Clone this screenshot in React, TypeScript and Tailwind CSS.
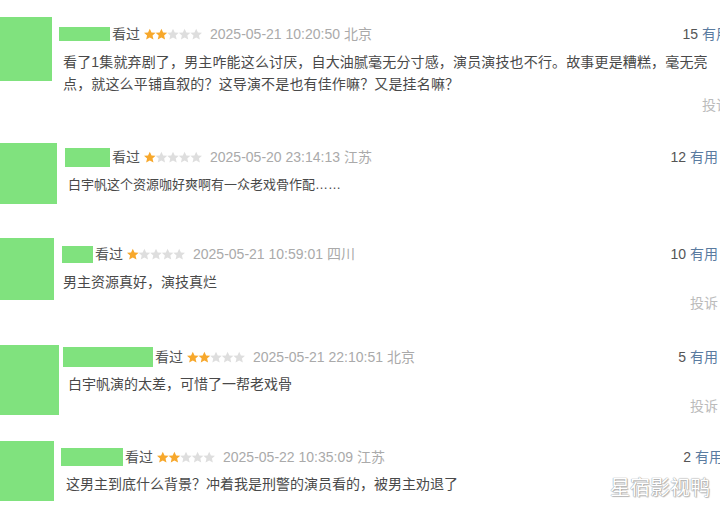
const font = {
  fontFamily: '"Liberation Sans", "Noto Sans CJK SC", sans-serif',
};

const Stars = ({ n }: { n: number }) => (
  <svg width="58" height="13" viewBox="0 0 60 13" className="shrink-0">
    {[0, 1, 2, 3, 4].map((i) => (
      <path
        key={i}
        transform={`translate(${i * 12} 0.5)`}
        d="M6 0 L7.8 3.9 L12 4.3 L8.8 7.1 L9.8 11.3 L6 9.1 L2.2 11.3 L3.2 7.1 L0 4.3 L4.2 3.9 Z"
        fill={i < n ? "#f7a82c" : "#dedede"}
      />
    ))}
  </svg>
);

type Comment = {
  block: string;
  avatar: string;
  content: string;
  name: string;
  text: string;
  report: string | null;
  stars: number;
  date: string;
  votes: number;
  lines: string[];
};

const comments: Comment[] = [
  {
    block: "h-[130px]",
    avatar: "mt-[17px] w-[52px] h-[64px]",
    content: "ml-[7px] mt-[24px] mr-[-10px]",
    name: "w-[51px] h-[14px]",
    text: "mt-[7px] pl-[4px] text-[14px] leading-[22px] tracking-[0.15px]",
    report: "mt-0",
    stars: 2,
    date: "2025-05-21 10:20:50 北京",
    votes: 15,
    lines: [
      "看了1集就弃剧了，男主咋能这么讨厌，自大油腻毫无分寸感，演员演技也不行。故事更是糟糕，毫无亮",
      "点，就这么平铺直叙的？这导演不是也有佳作嘛？又是挂名嘛？",
    ],
  },
  {
    block: "h-[100px]",
    avatar: "mt-[13px] w-[57px] h-[61px]",
    content: "ml-[8px] mt-[17px] mr-[2px]",
    name: "w-[45px] h-[19px]",
    text: "mt-[7px] pl-[3px] text-[13px] leading-[22px]",
    report: null,
    stars: 1,
    date: "2025-05-20 23:14:13 江苏",
    votes: 12,
    lines: ["白宇帆这个资源咖好爽啊有一众老戏骨作配……"],
  },
  {
    block: "h-[105px]",
    avatar: "mt-[8px] w-[54px] h-[62px]",
    content: "ml-[8px] mt-[14px] mr-[2px]",
    name: "w-[31px] h-[17px]",
    text: "mt-[7px] pl-[1px] text-[14px] leading-[22px]",
    report: "mt-0",
    stars: 1,
    date: "2025-05-21 10:59:01 四川",
    votes: 10,
    lines: ["男主资源真好，演技真烂"],
  },
  {
    block: "h-[100px]",
    avatar: "mt-[10px] w-[59px] h-[70px]",
    content: "ml-[4px] mt-[12px] mr-[2px]",
    name: "w-[90px] h-[20px]",
    text: "mt-[6px] pl-[5px] text-[14px] leading-[22px]",
    report: "mt-[1px]",
    stars: 2,
    date: "2025-05-21 22:10:51 北京",
    votes: 5,
    lines: ["白宇帆演的太差，可惜了一帮老戏骨"],
  },
  {
    block: "h-[76px]",
    avatar: "mt-[6px] w-[54px] h-[60px]",
    content: "ml-[7px] mt-[12px] mr-[-3px]",
    name: "w-[62px] h-[18px]",
    text: "mt-[6px] pl-[5px] text-[14px] leading-[22px]",
    report: null,
    stars: 2,
    date: "2025-05-22 10:35:09 江苏",
    votes: 2,
    lines: ["这男主到底什么背景？冲着我是刑警的演员看的，被男主劝退了"],
  },
];

export default function App() {
  return (
    <div
      className="relative w-[720px] h-[511px] overflow-hidden bg-white"
      style={font}
    >
      {comments.map((c, idx) => (
        <div key={idx} className={`flex items-start ${c.block}`}>
          <div className={`shrink-0 bg-[#80e27e] ${c.avatar}`} />
          <div className={`flex-1 min-w-0 ${c.content}`}>
            <div className="flex items-center h-[20px] text-[14px] leading-[20px] whitespace-nowrap">
              <div className={`shrink-0 bg-[#80e27e] ${c.name}`} />
              <span className="ml-[2px] text-[#555]">看过</span>
              <span className="ml-[4px] flex items-center">
                <Stars n={c.stars} />
              </span>
              <span className="ml-[8px] text-[#aaa]">{c.date}</span>
              <span className="ml-auto text-[#555]">
                {c.votes} <span className="text-[#5a7ba0]">有用</span>
              </span>
            </div>
            <div className={`text-[#494949] whitespace-nowrap ${c.text}`}>
              {c.lines.map((l, i) => (
                <div key={i}>{l}</div>
              ))}
            </div>
            {c.report && (
              <div
                className={`text-right text-[14px] leading-[20px] text-[#bbb] ${c.report}`}
              >
                投诉
              </div>
            )}
          </div>
        </div>
      ))}
      <div className="absolute left-[610px] top-[476px] text-[20px] leading-[24px] text-white [text-shadow:0_0_1px_#999,0_0_1px_#999,1px_1px_1px_#bbb]">
        星宿影视鸭
      </div>
    </div>
  );
}
